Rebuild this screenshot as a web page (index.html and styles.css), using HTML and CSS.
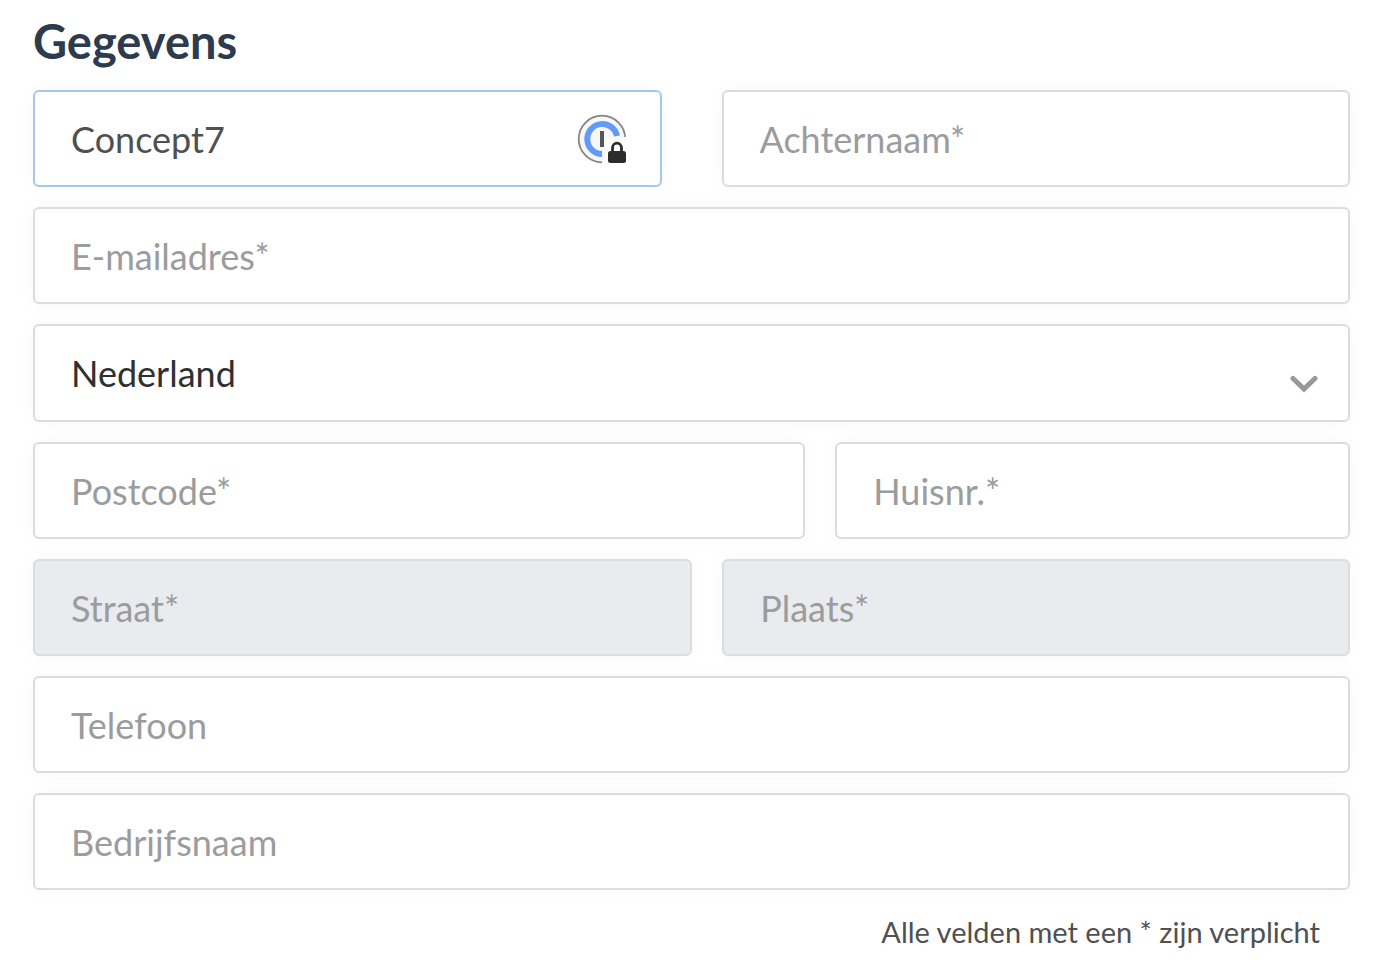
FILE: index.html
```html
<!doctype html>
<html lang="nl">
<head>
    <meta charset="utf-8">
    <meta name="viewport" content="width=device-width, initial-scale=1">
    <title>Gegevens</title>
    <link rel="stylesheet" href="styles.css">
</head>
<body>
    <form class="gegevens" action="" method="post">
        <h1>Gegevens</h1>

        <div class="rij rij-naam">
            <div class="veld">
                <input class="actief" type="text" name="voornaam" value="Concept7" aria-label="Voornaam" autocomplete="off">
                <button type="button" class="wachtwoordkluis" aria-label="Automatisch invullen">
                    <svg width="50" height="50" viewBox="0 0 50 50" aria-hidden="true">
                        <circle cx="25" cy="25" r="23" fill="#f7f7f7"/>
                        <path d="M25 48.300A23.300 23.300 0 1 1 48.300 25" fill="none" stroke="#858585" stroke-width="1.800"/>
                        <path d="M25 40A15 15 0 1 1 40 22" fill="none" stroke="#629bf5" stroke-width="6"/>
                        <rect x="23" y="17" width="4" height="16" fill="#555"/>
                        <path d="M28 50V34q0-10 11-11h11v27z" fill="#fff"/>
                        <rect x="31" y="37" width="18" height="12" rx="2.500" fill="#2c2c2e"/>
                        <path d="M35.500 38v-4a4.500 4.800 0 0 1 9 0v4" fill="none" stroke="#2c2c2e" stroke-width="2.800"/>
                    </svg>
                </button>
            </div>
            <div class="veld">
                <input type="text" name="achternaam" placeholder="Achternaam*" aria-label="Achternaam">
            </div>
        </div>

        <div class="rij">
            <div class="veld">
                <input type="email" name="email" placeholder="E-mailadres*" aria-label="E-mailadres">
            </div>
        </div>

        <div class="rij">
            <div class="veld">
                <select name="land" aria-label="Land">
                    <option value="NL" selected>Nederland</option>
                </select>
                <svg class="pijl" width="28" height="18" viewBox="0 0 28 18" aria-hidden="true">
                    <path d="M3 3.500L14 14L25 3.500" fill="none" stroke="#999" stroke-width="5" stroke-linecap="round" stroke-linejoin="miter"/>
                </svg>
            </div>
        </div>

        <div class="rij rij-postcode">
            <div class="veld">
                <input type="text" name="postcode" placeholder="Postcode*" aria-label="Postcode">
            </div>
            <div class="veld">
                <input type="text" name="huisnr" placeholder="Huisnr.*" aria-label="Huisnummer">
            </div>
        </div>

        <div class="rij rij-adres">
            <div class="veld">
                <input type="text" name="straat" placeholder="Straat*" aria-label="Straat" disabled>
            </div>
            <div class="veld">
                <input type="text" name="plaats" placeholder="Plaats*" aria-label="Plaats" disabled>
            </div>
        </div>

        <div class="rij">
            <div class="veld">
                <input type="tel" name="telefoon" placeholder="Telefoon" aria-label="Telefoon">
            </div>
        </div>

        <div class="rij">
            <div class="veld">
                <input type="text" name="bedrijfsnaam" placeholder="Bedrijfsnaam" aria-label="Bedrijfsnaam">
            </div>
        </div>

        <p class="verplicht">Alle velden met een * zijn verplicht</p>
    </form>
</body>
</html>
```

FILE: styles.css
```css
* {
    margin: 0;
    padding: 0;
    box-sizing: border-box;
}

body {
    background: #fff;
    color: #4f5051;
    font-family: Lato, "Liberation Sans", sans-serif;
}

.gegevens {
    display: flex;
    flex-direction: column;
    gap: 20px;
    padding: 12px 36px 20px 33px;
}

h1 {
    color: #2c3b4d;
    font-size: 47px;
    font-weight: 700;
    line-height: 58px;
}

.rij {
    display: grid;
    grid-template-columns: 1fr;
    gap: 30px;
}

.rij-naam {
    grid-template-columns: 1fr 1fr;
    gap: 60px;
}

.rij-postcode {
    grid-template-columns: 3fr 2fr;
}

.rij-adres {
    grid-template-columns: 21fr 20fr;
}

.veld {
    position: relative;
}

.veld input,
.veld select {
    display: block;
    width: 100%;
    height: 97px;
    padding: 0 36px;
    border: 2px solid #dcdcdc;
    border-radius: 6px;
    background: #fff;
    box-shadow: 0 0 20px rgba(0, 0, 0, .03);
    color: #4f5051;
    font-family: inherit;
    font-size: 36px;
    outline: none;
}

.veld select {
    height: 98px;
    appearance: none;
    color: #303030;
}

.veld input::placeholder {
    color: #9b9c9e;
    opacity: 1;
}

.veld input.actief {
    border-color: #a5c7ec;
}

.veld input:disabled {
    background: #e9ebee;
}

.wachtwoordkluis {
    position: absolute;
    top: 24px;
    right: 35px;
    width: 50px;
    height: 50px;
    border: 0;
    background: none;
    cursor: pointer;
}

.wachtwoordkluis svg {
    display: block;
}

.pijl {
    position: absolute;
    top: 51px;
    right: 32px;
    pointer-events: none;
}

.verplicht {
    padding: 4px 30px 0 0;
    font-size: 29px;
    line-height: 36px;
    text-align: right;
}
```
